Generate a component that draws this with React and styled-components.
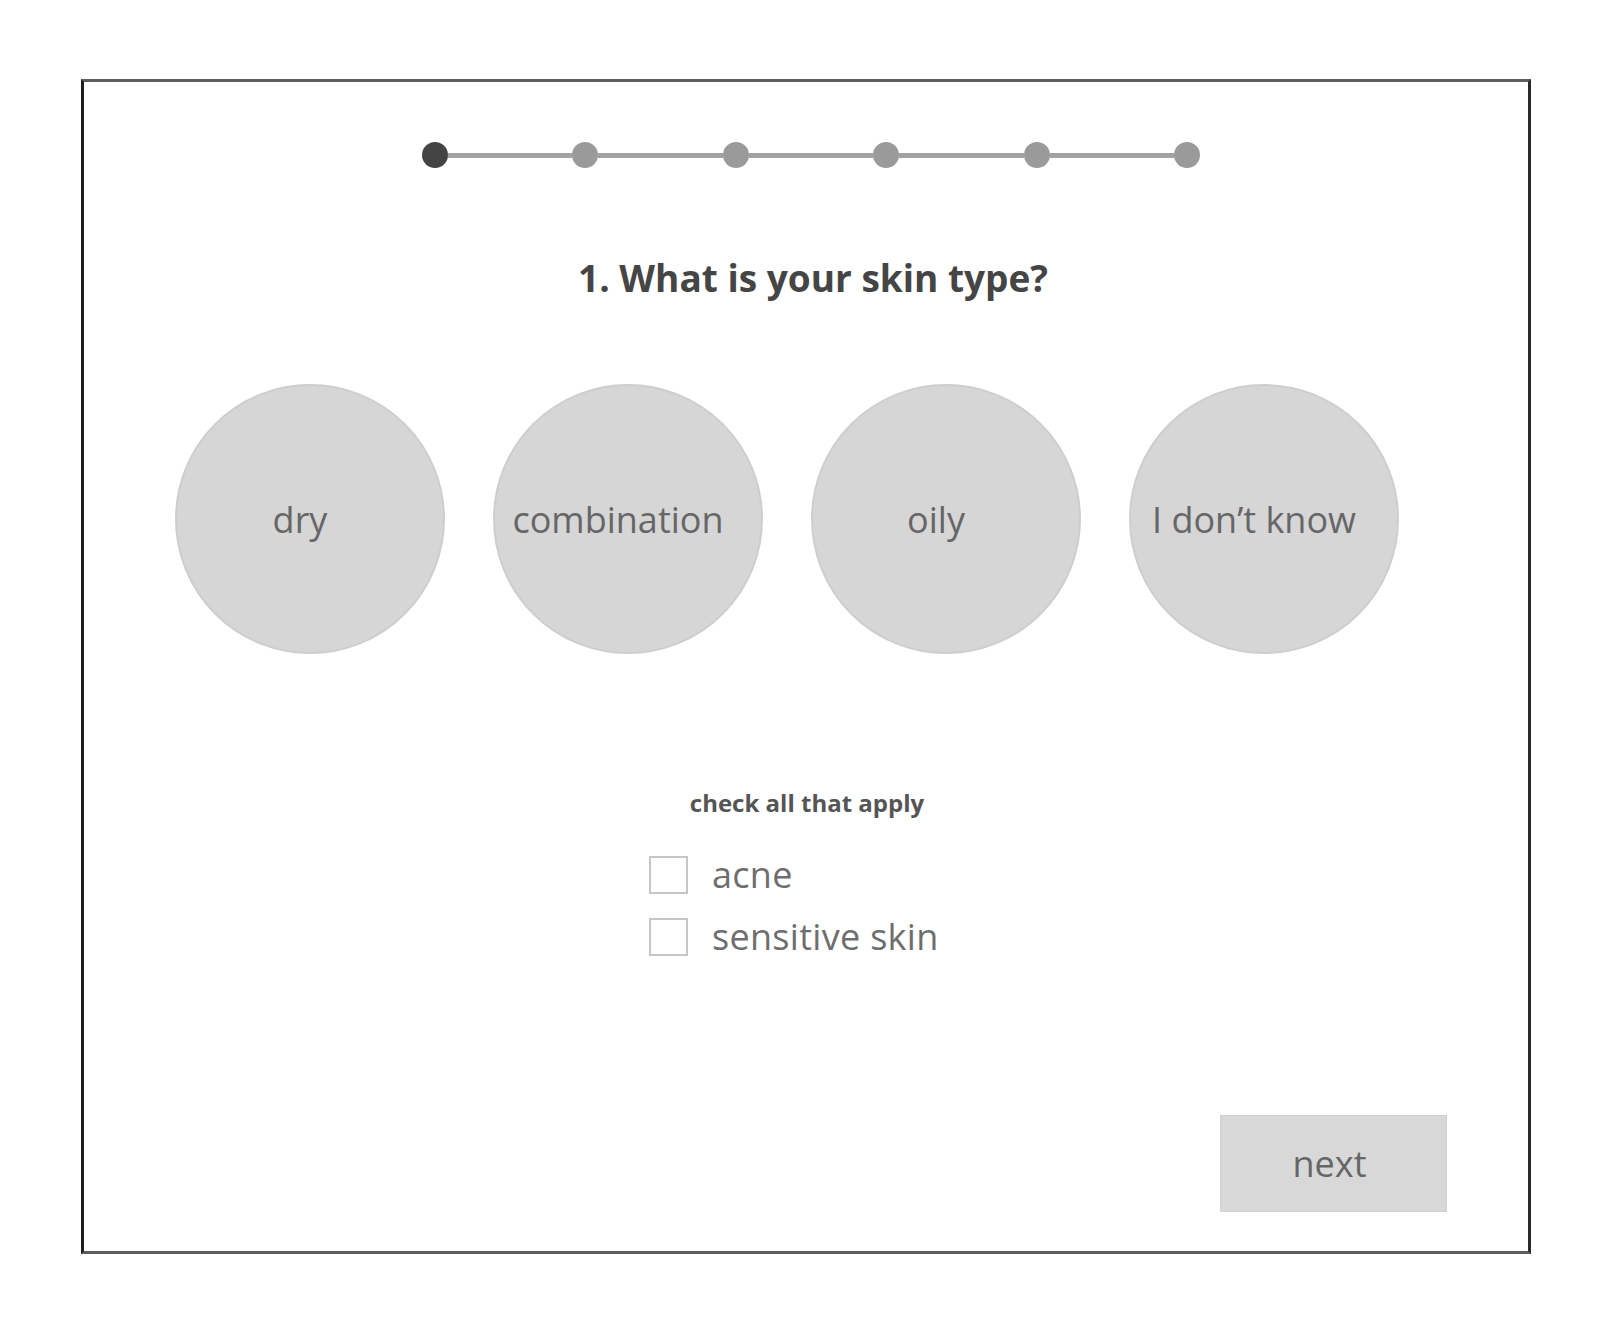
import React from 'react';
import styled, { createGlobalStyle } from 'styled-components';

const GlobalStyle = createGlobalStyle`
  body {
    margin: 0;
    background: #ffffff;
    font-family: 'Open Sans', 'Liberation Sans', sans-serif;
  }
`;

const Frame = styled.div`
  box-sizing: border-box;
  width: 1450px;
  height: 1175px;
  margin: 79px 0 0 81px;
  border-style: solid;
  border-width: 3px;
  border-color: #5e5e5e #2a2a2a #5e5e5e #1e1e1e;
  background: #ffffff;
  display: flex;
  flex-direction: column;
  align-items: center;
  padding: 60px 0 39px 0;
`;

const Stepper = styled.div`
  width: 778px;
  display: flex;
  align-items: center;
  margin-left: 10px;
`;

const Dot = styled.span`
  width: 26px;
  height: 26px;
  border-radius: 50%;
  flex: none;
  background: ${props => (props.active ? '#444444' : '#9a9a9a')};
`;

const Segment = styled.span`
  flex: 1;
  height: 5px;
  background: #a2a2a2;
`;

const Title = styled.h1`
  margin: 84px 0 0 14px;
  font-size: 37px;
  font-weight: 700;
  line-height: normal;
  color: #454545;
`;

const Options = styled.div`
  display: flex;
  gap: 48px;
  margin: 81px 0 0 0;
  padding-right: 38px;
`;

const Option = styled.button`
  box-sizing: border-box;
  width: 270px;
  height: 270px;
  border-radius: 50%;
  border: 2px solid #cecece;
  background: #d6d6d6;
  display: flex;
  align-items: center;
  justify-content: center;
  padding: 0 20px 0 0;
  font-family: 'Open Sans', 'Liberation Sans', sans-serif;
  font-size: 36px;
  color: #666666;
  white-space: nowrap;
  cursor: pointer;
`;

const Hint = styled.p`
  margin: 132px 0 0 2px;
  font-size: 24px;
  font-weight: 700;
  line-height: normal;
  color: #555555;
`;

const CheckList = styled.div`
  display: flex;
  flex-direction: column;
  gap: 13px;
  margin-top: 31px;
  align-self: flex-start;
  margin-left: 565px;
`;

const CheckRow = styled.label`
  display: flex;
  align-items: center;
  gap: 24px;
  font-size: 36px;
  letter-spacing: 0.3px;
  line-height: normal;
  color: #6e6e6e;
  cursor: pointer;
`;

const Box = styled.span`
  box-sizing: border-box;
  width: 39px;
  height: 38px;
  border: 2px solid #c6c6c6;
  background: #ffffff;
  flex: none;
`;

const NextButton = styled.button`
  margin: auto 81px 0 0;
  align-self: flex-end;
  width: 227px;
  height: 97px;
  border: 1px solid #d0d0d0;
  background: #d8d8d8;
  padding: 0 8px 0 0;
  font-family: 'Open Sans', 'Liberation Sans', sans-serif;
  font-size: 36px;
  color: #666666;
  cursor: pointer;
`;

const steps = [0, 1, 2, 3, 4, 5];
const options = ['dry', 'combination', 'oily', 'I don\u2019t know'];
const extras = ['acne', 'sensitive skin'];

const App = () => (
  <>
    <GlobalStyle />
    <Frame>
      <Stepper>
        {steps.map(i => (
          <React.Fragment key={i}>
            {i > 0 && <Segment />}
            <Dot active={i === 0} />
          </React.Fragment>
        ))}
      </Stepper>
      <Title>1. What is your skin type?</Title>
      <Options>
        {options.map(o => (
          <Option key={o}>{o}</Option>
        ))}
      </Options>
      <Hint>check all that apply</Hint>
      <CheckList>
        {extras.map(e => (
          <CheckRow key={e}>
            <Box />
            {e}
          </CheckRow>
        ))}
      </CheckList>
      <NextButton>next</NextButton>
    </Frame>
  </>
);

export default App;
